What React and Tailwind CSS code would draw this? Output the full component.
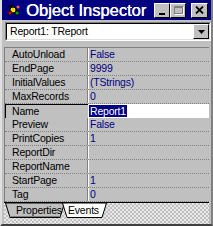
import React from 'react';

const rows = [
  { name: 'AutoUnload', value: 'False' },
  { name: 'EndPage', value: '9999' },
  { name: 'InitialValues', value: '(TStrings)' },
  { name: 'MaxRecords', value: '0' },
  { name: 'Name', value: 'Report1', selected: true },
  { name: 'Preview', value: 'False' },
  { name: 'PrintCopies', value: '1' },
  { name: 'ReportDir', value: '' },
  { name: 'ReportName', value: '' },
  { name: 'StartPage', value: '1' },
  { name: 'Tag', value: '0' },
];

const font = { fontFamily: '"Liberation Sans", Arial, sans-serif' };

const CaptionButton = ({ children, className = '' }) => (
  <div
    className={`h-[15px] w-[16px] bg-[#c0c0c0] border-t border-l border-white border-b border-r border-b-black border-r-black flex items-center justify-center ${className}`}
  >
    {children}
  </div>
);

const AppIcon = () => (
  <svg width="16" height="14" viewBox="0 0 16 14">
    <path d="M2 3 L6 1 L8 4 L5 7 Z" fill="#000" />
    <circle cx="7" cy="7" r="3" fill="#ffd800" stroke="#000" strokeWidth="1" />
    <circle cx="4" cy="10" r="2" fill="#e00000" stroke="#000" strokeWidth="0.8" />
    <circle cx="11" cy="10" r="2" fill="#00a000" stroke="#000" strokeWidth="0.8" />
    <circle cx="12" cy="4" r="1.5" fill="#ff6060" />
  </svg>
);

const GridRow = ({ row }) => {
  if (row.selected) {
    return (
      <div className="flex h-[14px]">
        <div className="w-[83px] border-t border-l border-black flex items-center pl-[6px] bg-[#c0c0c0]">
          <span className="text-black">{row.name}</span>
        </div>
        <div className="flex-1 bg-white flex items-center pl-px">
          <span className="bg-[#000080] text-white px-px leading-[12px]">{row.value}</span>
        </div>
      </div>
    );
  }
  return (
    <div className="flex h-[14px] border-b border-dotted border-[#808080]">
      <div className="w-[83px] border-r border-[#808080] flex items-center pl-[7px]">
        <span className="text-black">{row.name}</span>
      </div>
      <div className="flex-1 border-l border-white flex items-center pl-[1px]">
        <span className="text-[#000080]">{row.value}</span>
      </div>
    </div>
  );
};

export default function App() {
  return (
    <div
      className="w-[213px] h-[226px] bg-[#c0c0c0] flex flex-col border-l-2 border-r-2 border-b-2 border-l-[#dfdfdf] border-r-[#808080] border-b-[#404040] text-[10.5px] tracking-[-0.2px]"
      style={font}
    >
      {/* title bar */}
      <div className="h-[20px] bg-[#000080] flex items-center pl-[4px] pr-[3px] shrink-0">
        <AppIcon />
        <span className="ml-[4px] text-white text-[16.5px] leading-none tracking-normal [text-shadow:0.4px_0_0_#fff]">Object Inspector</span>
        <div className="ml-auto flex items-center">
          <CaptionButton>
            <div className="w-[6px] h-[2px] bg-black mt-[7px]" />
          </CaptionButton>
          <CaptionButton>
            <div className="w-[9px] h-[8px] border border-t-2 border-[#808080] shadow-[1px_1px_0_#fff]" />
          </CaptionButton>
          <CaptionButton className="ml-[5px] w-[17px]">
            <svg width="9" height="8" viewBox="0 0 9 8">
              <path d="M1 0.5 L8 7.5 M8 0.5 L1 7.5" stroke="#000" strokeWidth="1.8" />
            </svg>
          </CaptionButton>
        </div>
      </div>

      {/* combo box */}
      <div className="mt-[2px] ml-[3px] h-[19px] shrink-0 bg-white border-t border-l border-[#808080] border-b border-r border-b-white border-r-white flex">
        <div className="flex-1 flex border-t border-l border-black border-b border-r border-b-[#dfdfdf] border-r-[#dfdfdf]">
          <div className="flex-1 flex items-center pl-[3px] text-black">Report1: TReport</div>
          <div className="w-[16px] bg-[#c0c0c0] border-t border-l border-white border-b border-r border-b-black border-r-black flex items-center justify-center">
            <svg width="7" height="4" viewBox="0 0 7 4">
              <path d="M0 0 H7 L3.5 4 Z" fill="#000" />
            </svg>
          </div>
        </div>
      </div>

      {/* property grid */}
      <div className="mt-[6px] ml-[2px] mr-[2px] border-t border-l border-[#808080] shrink-0">
        {rows.map((row) => (
          <GridRow key={row.name} row={row} />
        ))}
      </div>

      {/* tab set */}
      <div className="ml-[2px] mr-[2px] flex-1 border-t border-black bg-[repeating-conic-gradient(#c0c0c0_0_25%,#e8e8e8_0_50%)] bg-[length:4px_4px] flex pl-[1px]">
        <div className="relative w-[60px] h-[15px]">
          <svg className="absolute inset-0" width="60" height="15" viewBox="0 0 60 15">
            <path d="M0.5 0 L5 14.5 L55 14.5 L59.5 0 Z" fill="#c0c0c0" stroke="#000" strokeWidth="1" />
            <path d="M6 13.5 L54 13.5" stroke="#808080" strokeWidth="1" />
          </svg>
          <span className="absolute left-[11px] top-0 leading-[14px] text-black">Properties</span>
        </div>
        <div className="relative w-[45px] h-[15px] -ml-[3px]">
          <svg className="absolute inset-0" width="45" height="15" viewBox="0 0 45 15">
            <path d="M0.5 0 L5 14.5 L40 14.5 L44.5 0 Z" fill="#fff" stroke="#000" strokeWidth="1" />
          </svg>
          <span className="absolute left-[6px] top-0 leading-[14px] text-black">Events</span>
        </div>
      </div>
    </div>
  );
}
